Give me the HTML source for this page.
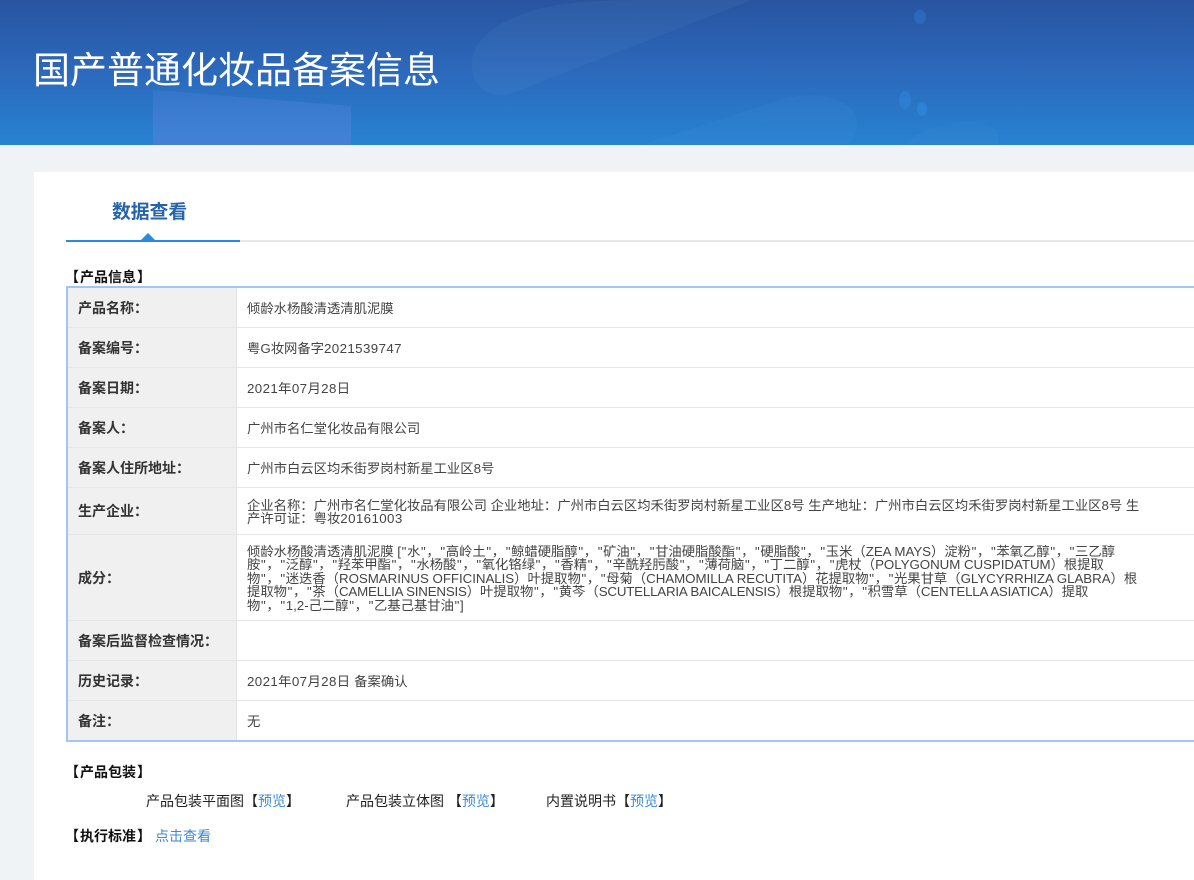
<!DOCTYPE html>
<html lang="zh-CN"><head><meta charset="utf-8"><title>国产普通化妆品备案信息</title>
<style>
*{box-sizing:border-box}
html,body{margin:0;padding:0;width:1194px;height:880px;overflow:hidden;background:#eff3f6;font-family:"Liberation Sans","Noto Sans CJK SC",sans-serif;color:#333}
#hd{position:absolute;left:0;top:0;width:1194px;height:145px;overflow:hidden;background:linear-gradient(180deg,#2854a0 0%,#2c69bc 50%,#2782d1 100%)}
#hd svg{position:absolute;left:0;top:0}
h1{position:absolute;left:33px;top:45px;margin:0;font-size:37px;line-height:52px;font-weight:400;color:#fff;white-space:nowrap}
#card{position:absolute;left:34px;top:172px;width:1160px;height:708px;background:#fff}
.t{position:absolute;white-space:nowrap;font-size:13.33px;line-height:20px}
.tab{left:112px;top:198px;font-size:18.8px;line-height:28px;font-weight:700;color:#2564ab}
.sec{font-weight:700;color:#111;font-size:14px;text-spacing-trim:space-all}
.line{position:absolute;left:66px;top:240px;width:1128px;height:2px;background:#e6e8ea}
.active{position:absolute;left:66px;top:240px;width:174px;height:2px;background:#2a8ae0}
.tri{position:absolute;left:141px;top:233px;width:0;height:0;border-left:7px solid transparent;border-right:7px solid transparent;border-bottom:7px solid #2a8ae0}
#tb{position:absolute;left:66px;top:286px;width:1128px;height:456px;border:solid #a3c5f3;border-width:2px 0 2px 2px;background:#fff}
.lab{position:absolute;left:68px;width:169px;top:288px;height:452px;background:#f0f0f0;border-right:1px solid #e3e3e3}
.hr{position:absolute;left:68px;width:1126px;height:1px;background:#e6e6e6}
.l{left:78px;font-weight:700;color:#333;font-size:14px}
.v{left:247px;color:#444}
.m{line-height:13px}
.n{letter-spacing:.38px}
i{font-style:normal;padding:0 .65px}
u{text-decoration:none}
.p{font-size:14px;color:#222}
a{color:#3a8ad6;text-decoration:none}
</style></head><body>
<div id="hd">
<svg width="1194" height="145" viewBox="0 0 1194 145">
<defs><linearGradient id="g" x1="0" y1="0" x2="0" y2="1"><stop offset="0" stop-color="#4a80d8" stop-opacity=".35"/><stop offset="1" stop-color="#4a80d8" stop-opacity=".8"/></linearGradient></defs>
<path d="M153 90 L351 106 L351 145 L153 145 Z" fill="url(#g)"/>
<path d="M520 15 C545 5 580 0 640 0 L752 0 L520 90 C490 105 470 85 472 62 C473 40 495 25 520 15 Z" fill="#6fa8d8" opacity=".09"/>
<path d="M640 145 L780 100 C820 88 858 100 857 125 C856 135 852 142 846 145 Z" fill="#5ea6e4" opacity=".09"/>
<ellipse cx="920" cy="17" rx="6" ry="7" fill="#2f7fd0" opacity=".45"/>
<ellipse cx="905" cy="100" rx="6" ry="9" fill="#2f88dc" opacity=".5"/>
<ellipse cx="922" cy="109" rx="5" ry="7" fill="#2f8ade" opacity=".6"/>
<path d="M905 145 C925 120 985 115 998 132 L998 145 Z" fill="#5ea6e4" opacity=".07"/>
</svg>
<h1>国产普通化妆品备案信息</h1>
</div>
<div id="card"></div>
<div class="t tab">数据查看</div>
<div class="line"></div><div class="active"></div><div class="tri"></div>
<div class="t sec" style="left:65px;top:267px">【</div><div class="t sec" style="left:80px;top:267px">产品信息</div><div class="t sec" style="left:137px;top:267px">】</div>
<div id="tb"></div>
<div class="lab"></div>
<div class="hr" style="top:327px"></div><div class="hr" style="top:367px"></div><div class="hr" style="top:407px"></div><div class="hr" style="top:447px"></div><div class="hr" style="top:487px"></div><div class="hr" style="top:534px"></div><div class="hr" style="top:620px"></div><div class="hr" style="top:660px"></div><div class="hr" style="top:700px"></div>
<div class="t l" style="top:298px">产品名称：</div><div class="t v" style="top:299px">倾龄水杨酸清透清肌泥膜</div>
<div class="t l" style="top:338px">备案编号：</div><div class="t v" style="top:339px">粤G妆网备字<span class="n">2021539747</span></div>
<div class="t l" style="top:378px">备案日期：</div><div class="t v n" style="top:379px">2021年07月28日</div>
<div class="t l" style="top:418px">备案人：</div><div class="t v" style="top:419px">广州市名仁堂化妆品有限公司</div>
<div class="t l" style="top:458px">备案人住所地址：</div><div class="t v" style="top:459px">广州市白云区均禾街罗岗村新星工业区8号</div>
<div class="t l" style="top:501px">生产企业：</div>
<div class="t v m" style="top:499px">企业名称：广州市名仁堂化妆品有限公司 企业地址：广州市白云区均禾街罗岗村新星工业区8号 生产地址：广州市白云区均禾街罗岗村新星工业区8号 生<br>产许可证：粤妆<span class="n">20161003</span></div>
<div class="t l" style="top:568px">成分：</div>
<div class="t v m" style="top:545px;line-height:13.4px">倾龄水杨酸清透清肌泥膜 [<i>"</i>水<i>"</i>，<i>"</i>高岭土<i>"</i>，<i>"</i>鲸蜡硬脂醇<i>"</i>，<i>"</i>矿油<i>"</i>，<i>"</i>甘油硬脂酸酯<i>"</i>，<i>"</i>硬脂酸<i>"</i>，<i>"</i>玉米（<u style="letter-spacing:-.05px">ZEA MAYS</u>）淀粉<i>"</i>，<i>"</i>苯氧乙醇<i>"</i>，<i>"</i>三乙醇<br>胺<i>"</i>，<i>"</i>泛醇<i>"</i>，<i>"</i>羟苯甲酯<i>"</i>，<i>"</i>水杨酸<i>"</i>，<i>"</i>氧化铬绿<i>"</i>，<i>"</i>香精<i>"</i>，<i>"</i>辛酰羟肟酸<i>"</i>，<i>"</i>薄荷脑<i>"</i>，<i>"</i>丁二醇<i>"</i>，<i>"</i>虎杖（<u style="letter-spacing:-.05px">POLYGONUM CUSPIDATUM</u>）根提取<br>物<i>"</i>，<i>"</i>迷迭香（<u style="letter-spacing:-.05px">ROSMARINUS OFFICINALIS</u>）叶提取物<i>"</i>，<i>"</i>母菊（<u style="letter-spacing:-.05px">CHAMOMILLA RECUTITA</u>）花提取物<i>"</i>，<i>"</i>光果甘草（<u style="letter-spacing:-.05px">GLYCYRRHIZA GLABRA</u>）根<br>提取物<i>"</i>，<i>"</i>茶（<u style="letter-spacing:-.2px">CAMELLIA SINENSIS</u>）叶提取物<i>"</i>，<i>"</i>黄芩（<u style="letter-spacing:-.2px">SCUTELLARIA BAICALENSIS</u>）根提取物<i>"</i>，<i>"</i>积雪草（<u style="letter-spacing:-.2px">CENTELLA ASIATICA</u>）提取<br>物<i>"</i>，<i>"</i>1,2-己二醇<i>"</i>，<i>"</i>乙基己基甘油<i>"</i>]</div>
<div class="t l" style="top:631px">备案后监督检查情况：</div>
<div class="t l" style="top:671px">历史记录：</div><div class="t v" style="top:672px"><span class="n">2021年07月28日</span> 备案确认</div>
<div class="t l" style="top:711px">备注：</div><div class="t v" style="top:712px">无</div>
<div class="t sec" style="left:65px;top:762px">【</div><div class="t sec" style="left:80px;top:762px">产品包装</div><div class="t sec" style="left:137px;top:762px">】</div>
<div class="t p" style="left:146px;top:791px">产品包装平面图【<a>预览</a>】</div>
<div class="t p" style="left:346px;top:791px">产品包装立体图 【<a>预览</a>】</div>
<div class="t p" style="left:546px;top:791px">内置说明书【<a>预览</a>】</div>
<div class="t sec" style="left:65px;top:826px">【</div><div class="t sec" style="left:80px;top:826px">执行标准</div><div class="t sec" style="left:137px;top:826px">】</div>
<div class="t p" style="left:155px;top:826px"><a>点击查看</a></div>
</body></html>
